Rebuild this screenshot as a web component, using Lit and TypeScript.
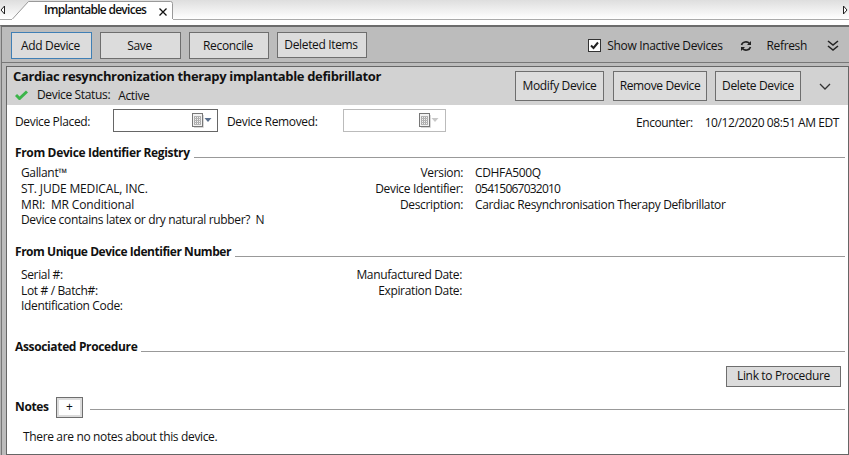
import { LitElement, html, css, svg } from "lit";
import { customElement } from "lit/decorators.js";

const calendar = (disabled: boolean) => html`<svg class="cal" width="20" height="15" viewBox="0 0 20 15">
  <rect x="0.5" y="0.5" width="10" height="13" fill="#f2f2f2" stroke="#777"></rect>
  <path d="M11.500 2v12.500H2" fill="none" stroke="#d8d8d8"></path>
  ${[2.5, 4.5, 6.5, 8.5].map(x => svg`<line x1="${x}" x2="${x}" y1="3" y2="12" stroke="#a8a8a8"></line>`)}
  ${[3.5, 5.5, 7.5, 9.5, 11.5].map(y => svg`<line x1="2" x2="9" y1="${y}" y2="${y}" stroke="#b4b4b4"></line>`)}
  <path d="M12.500 5h7l-3.500 4z" fill="${disabled ? "#c8c8c8" : "#5a6f8c"}"></path>
</svg>`;

@customElement("app-root")
export class AppRoot extends LitElement {
  static styles = css`
    :host { display: block; width: 849px; height: 455px; overflow: hidden; background: #fff; font: 12px/16px "Open Sans", "Noto Sans", sans-serif; color: #111; letter-spacing: -0.35px; }
    button { font: inherit; letter-spacing: inherit; color: inherit; background: #dcdcdc; border: 1px solid #6e6e6e; padding: 0; margin: 0; display: block; }
    .strip { position: relative; height: 14px; background: linear-gradient(#dedede, #fff); border-bottom: 1px solid #aaa; display: flex; justify-content: space-between; align-items: flex-start; padding: 5px 0 0; }
    .strip > svg.arrow { display: block; }
    .arrow-r { margin-right: 1px; }
    .tab { position: absolute; left: 11px; top: 0; width: 163px; height: 21px; }
    .tab > svg.shape { position: absolute; left: 0; top: 0; }
    .tab span { position: absolute; left: 33px; top: 2px; font-weight: 600; letter-spacing: -0.72px; white-space: nowrap; }
    .tab > svg.x { position: absolute; left: 148px; top: 8px; }
    .gap { height: 5px; }
    .outer { height: 430px; box-sizing: border-box; border-left: 1px solid #b4b4b4; box-shadow: inset 1px 0 #777; background: #bcbcbc; border-top: 2px solid #6c6c6c; display: flex; flex-direction: column; }
    .toolbar { height: 36px; box-sizing: border-box; display: flex; align-items: center; padding: 2px 0 0 10px; flex: none; border-bottom: 1px solid #777; }
    .toolbar button { height: 27px; padding-right: 2px; }
    .b-add { width: 81px; border-color: #3f7fb5 !important; margin-right: 8px; }
    .b-save { width: 81px; margin-right: 8px; }
    .b-rec { width: 80px; margin-right: 8px; }
    .toolbar .b-del { width: 90px; height: 26px; align-self: flex-start; margin-top: 3px; }
    .spacer { flex: 1; }
    .check { display: flex; align-items: center; gap: 6px; margin-right: 17px; }
    .box { width: 13px; height: 13px; box-sizing: border-box; border: 1px solid #333; background: #fff; display: block; }
    .box svg { display: block; }
    .refresh { margin-right: 20px; }
    .more { margin-right: 10px; display: block; }
    .refresh-ic { margin-right: 15px; display: block; }
    .panel { flex: 1; margin: 3px 0 0 5px; background: #fff; border: 1px solid #666; min-height: 0; }
    .head { height: 38px; background: #d2d2d2; display: flex; padding: 1px 0 0 6px; box-sizing: border-box; }
    .titles { flex: 1; }
    .title { font-weight: 700; font-size: 13px; line-height: 16px; }
    .status { display: flex; align-items: center; margin-top: 1px; padding-left: 2px; }
    .status svg { margin-right: 9px; }
    .status b { font-weight: 400; margin-left: 8px; padding-top: 3px; }
    .head button { height: 30px; margin-top: 3px; }
    .b-mod { width: 89px; margin-right: 9px; }
    .b-rem { width: 94px; margin-right: 8px; }
    .b-dele { width: 86px; }
    .chev { margin: 15px 17px 0 18px; display: block; }
    .dates { display: flex; align-items: center; height: 23px; margin-top: 4px; padding-left: 8px; }
    .lab1 { width: 98px; padding-top: 2px; }
    .field { width: 105px; height: 23px; box-sizing: border-box; border: 1px solid #666; display: flex; align-items: center; justify-content: flex-end; padding-right: 5px; margin-right: 9px; }
    .field.off { width: 103px; border-color: #bbb; margin-right: 0; padding-right: 6px; }
    .lab2 { width: 116px; padding-top: 2px; }
    .enc { margin-left: auto; margin-right: 9px; padding-top: 4px; display: flex; gap: 12px; letter-spacing: -0.42px; }
    .sec { display: flex; font-weight: 700; padding-left: 8px; height: 16px; color: #111; }
    .sec::after { content: ""; flex: 1; align-self: flex-start; height: 1px; background: #999; margin: 12px 3px 0 4px; }
    .s1 { margin-top: 13px; }
    .cols { display: grid; grid-template-columns: 330px 1fr; align-items: start; padding-left: 14px; line-height: 15.6px; }
    .c1 { margin-top: 4.4px; }
    .c2 { margin-top: 7px; }
    .wide { letter-spacing: -0.16px; }
    .num { letter-spacing: -0.78px; }
    .kv { display: grid; grid-template-columns: 112px 1fr; column-gap: 12px; align-content: start; }
    .kv span:nth-child(odd) { text-align: right; }
    .s2 { margin-top: 16.200px; letter-spacing: -0.46px; }
    .kv2 { display: grid; grid-template-columns: 111px 1fr; align-content: start; }
    .kv2 span:nth-child(odd) { text-align: right; }
    .s3 { margin-top: 25px; }
    .linkrow { display: flex; justify-content: flex-end; margin-top: 11px; padding-right: 7px; }
    .linkrow button { width: 115px; height: 21px; }
    .s4 { margin-top: 10px; height: 21px; align-items: center; }
    .s4::after { margin: 12px 3px 0 7px; }
    .s4 button { width: 27px; height: 21px; margin-left: 7px; background: #fff; box-shadow: inset 0 0 0 2px #dcdcdc; font-weight: 400; line-height: 16px; }
    .none { padding-left: 16px; margin-top: 11px; }
  `;

  render() {
    return html`
      <div class="strip">
        <svg class="arrow" width="6" height="10" viewBox="0 0 6 10"><path d="M4.500 1 1 5l3.500 4z" fill="#fff" stroke="#222"></path></svg>
        <svg class="arrow arrow-r" width="6" height="10" viewBox="0 0 6 10"><path d="M1.500 1 5 5 1.500 9z" fill="#fff" stroke="#222"></path></svg>
        <div class="tab">
          <svg class="shape" width="163" height="21" viewBox="0 0 163 21">
            <path d="M1 19.500 17.500 1.500h142q2 0 2 2v16z" fill="#fff" stroke="#999"></path>
            <rect x="1" y="19" width="161" height="2" fill="#fff"></rect>
          </svg>
          <span>Implantable devices</span>
          <svg class="x" width="8" height="8" viewBox="0 0 8 8"><path d="M.5.5l7 7M7.500.5l-7 7" stroke="#111" stroke-width="1.300"></path></svg>
        </div>
      </div>
      <div class="gap"></div>
      <div class="outer">
        <div class="toolbar">
          <button class="b-add">Add Device</button>
          <button class="b-save">Save</button>
          <button class="b-rec">Reconcile</button>
          <button class="b-del">Deleted Items</button>
          <div class="spacer"></div>
          <label class="check"><span class="box"><svg width="11" height="11" viewBox="0 0 11 11"><path d="M2 5.500 4.500 8 9 2.500" fill="none" stroke="#222" stroke-width="2"></path></svg></span>Show Inactive Devices</label>
          <svg class="refresh-ic" width="12" height="12" viewBox="0 0 12 12"><path d="M1.500 5a4.500 4 0 0 1 8-1.500M10.500 7a4.500 4 0 0 1-8 1.500" fill="none" stroke="#222" stroke-width="1.600"></path><path d="M11 1v4H7zM1 11V7h4z" fill="#222"></path></svg>
          <span class="refresh">Refresh</span>
          <svg class="more" width="12" height="12" viewBox="0 0 12 12"><path d="M1 1l5 4 5-4M1 6l5 4 5-4" fill="none" stroke="#222" stroke-width="1.600"></path></svg>
        </div>
        <div class="panel">
          <div class="head">
            <div class="titles">
              <div class="title">Cardiac resynchronization therapy implantable defibrillator</div>
              <div class="status"><svg width="13" height="10" viewBox="0 0 13 10"><path d="M1 5l3.500 3.500L12 1.500" fill="none" stroke="#3cb54a" stroke-width="3"></path></svg>Device Status:<b>Active</b></div>
            </div>
            <button class="b-mod">Modify Device</button>
            <button class="b-rem">Remove Device</button>
            <button class="b-dele">Delete Device</button>
            <svg class="chev" width="12" height="8" viewBox="0 0 12 8"><path d="M1 1l5 5 5-5" fill="none" stroke="#333" stroke-width="1.300"></path></svg>
          </div>
          <div class="dates">
            <span class="lab1">Device Placed:</span>
            <div class="field">${calendar(false)}</div>
            <span class="lab2">Device Removed:</span>
            <div class="field off">${calendar(true)}</div>
            <div class="enc"><span>Encounter:</span><span>10/12/2020 08:51 AM EDT</span></div>
          </div>
          <div class="sec s1">From Device Identifier Registry</div>
          <div class="cols c1">
            <div>Gallant™<br><span class="wide">ST. JUDE MEDICAL, INC.</span><br><span class="wide">MRI:&nbsp; MR Conditional</span><br>Device contains latex or dry natural rubber?&nbsp; N</div>
            <div class="kv"><span>Version:</span><span>CDHFA500Q</span><span>Device Identifier:</span><span class="num">05415067032010</span><span>Description:</span><span>Cardiac Resynchronisation Therapy Defibrillator</span></div>
          </div>
          <div class="sec s2">From Unique Device Identifier Number</div>
          <div class="cols c2">
            <div>Serial #:<br>Lot # / Batch#:<br>Identification Code:</div>
            <div class="kv2"><span>Manufactured Date:</span><span></span><span>Expiration Date:</span><span></span></div>
          </div>
          <div class="sec s3">Associated Procedure</div>
          <div class="linkrow"><button>Link to Procedure</button></div>
          <div class="sec s4">Notes<button>+</button></div>
          <div class="none">There are no notes about this device.</div>
        </div>
      </div>
    `;
  }
}
